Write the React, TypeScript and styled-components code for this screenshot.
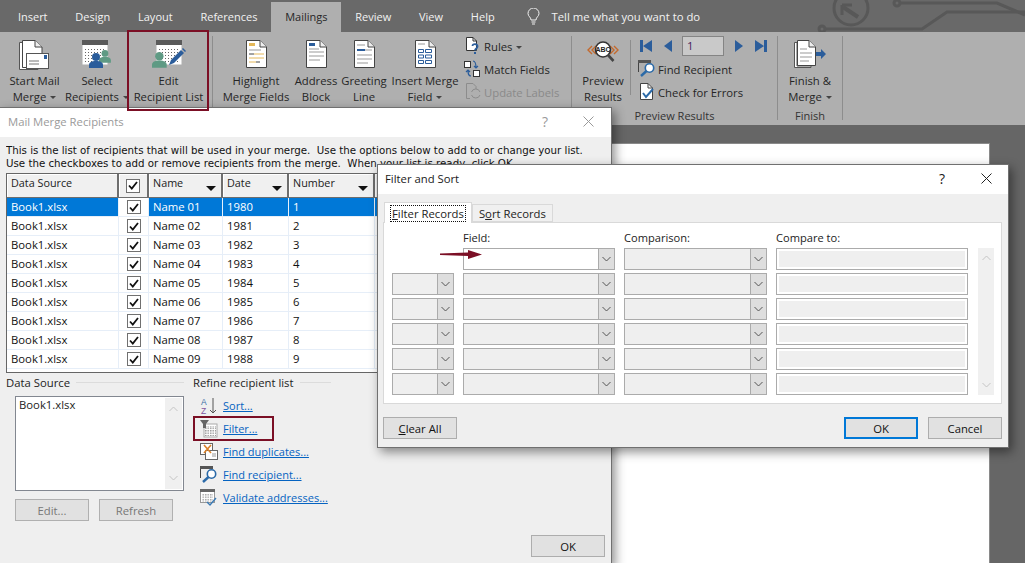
import type { ReactNode } from "react";
import styled, { createGlobalStyle } from "styled-components";

const GlobalStyle = createGlobalStyle`
  html, body {
    margin: 0;
    padding: 0;
    overflow: hidden;
    background: #666;
  }
  * {
    box-sizing: border-box;
  }
`;

const uiFont = `"Open Sans", "Noto Sans", "Liberation Sans", sans-serif`;
const textSize = "11.3px";

const tabs = [
  { label: "Insert" },
  { label: "Design" },
  { label: "Layout" },
  { label: "References" },
  { label: "Mailings", active: true },
  { label: "Review" },
  { label: "View" },
  { label: "Help" },
];

const recipients = [
  ["Name 01", "1980", "1"],
  ["Name 02", "1981", "2"],
  ["Name 03", "1982", "3"],
  ["Name 04", "1983", "4"],
  ["Name 05", "1984", "5"],
  ["Name 06", "1985", "6"],
  ["Name 07", "1986", "7"],
  ["Name 08", "1987", "8"],
  ["Name 09", "1988", "9"],
];

/* ---------- icons ---------- */

const Page = ({ children, x = 0 }: { children?: ReactNode; x?: number }) => (
  <g transform={`translate(${x} 0)`}>
    <path d="M.5.5H14L20.5 7V27.5H.5Z" fill="#fff" stroke="#444" />
    <path d="M14 .5V7H20.5" fill="#eee" stroke="#444" />
    {children}
  </g>
);

const Svg = styled.svg`
  display: block;
  flex: none;
`;

const MailMergeIcon = () => (
  <Svg width="32" height="30" viewBox="0 0 32 30">
    <path d="M.5 2.5H4V27.5H19V29.5H.5Z" fill="#fff" stroke="#555" />
    <path d="M3.5.5H16L23 7V27.5H3.5Z" fill="#fff" stroke="#444" />
    <path d="M16 .5V7H23" fill="#eee" stroke="#444" />
    <rect x="7.5" y="13.5" width="22" height="15" fill="#fff" stroke="#555" />
    <rect x="25" y="15" width="3" height="4" fill="#2b5d9b" />
    <path d="M10 21H20M10 24H20" stroke="#777" />
  </Svg>
);

const DottedCalendar = () => (
  <>
    <rect x=".5" y=".5" width="25" height="24" fill="#fff" />
    <rect width="26" height="5" fill="#5a5a5a" />
    <rect x="2" y="7" width="22" height="17" fill="url(#cal-dots)" />
  </>
);

const Dots = () => (
  <defs>
    <pattern id="cal-dots" width="3" height="3" patternUnits="userSpaceOnUse">
      <rect width="1" height="1" fill="#666" />
    </pattern>
  </defs>
);

const Person = ({ x, y, color, scale = 1 }: { x: number; y: number; color: string; scale?: number }) => (
  <g transform={`translate(${x} ${y}) scale(${scale})`} fill={color}>
    <circle cx="7" cy="4" r="4" />
    <path d="M0 15V12C0 9.5 2.5 8 7 8S14 9.5 14 12V15Z" />
  </g>
);

const SelectRecipientsIcon = () => (
  <Svg width="30" height="29" viewBox="0 0 30 29">
    <Dots />
    <DottedCalendar />
    <Person x={17} y={10} color="#5f9a84" scale={0.85} />
    <Person x={7} y={13} color="#2b5d9b" />
  </Svg>
);

const EditListIcon = () => (
  <Svg width="34" height="29" viewBox="0 0 34 29">
    <Dots />
    <g transform="translate(4 0)">
      <DottedCalendar />
    </g>
    <Person x={0} y={12} color="#5f9a84" scale={1.05} />
    <path d="M17 25L19 20L29 10L32 13L22 23Z" fill="#2b5d9b" />
    <path d="M30 9L31 8L34 11L33 12Z" fill="#2b5d9b" />
  </Svg>
);

const HighlightIcon = () => (
  <Svg width="21" height="28" viewBox="0 0 21 28">
    <Page>
      <rect x="3" y="3" width="6" height="3" fill="#e4b85a" />
      <path d="M3 10H15" stroke="#999" />
      <path d="M3 14H8" stroke="#444" />
      <path d="M8 14H18" stroke="#e4b85a" />
      <path d="M3 18H18" stroke="#e4b85a" />
      <path d="M3 22H10" stroke="#e4b85a" />
      <path d="M10 22H14" stroke="#444" />
    </Page>
  </Svg>
);

const AddressIcon = () => (
  <Svg width="21" height="28" viewBox="0 0 21 28">
    <Page>
      <rect x="3" y="3" width="6" height="3" fill="#2b5d9b" />
      <path d="M3 9H13M3 12H18M3 16H18M3 20H14" stroke="#999" />
    </Page>
  </Svg>
);

const GreetingIcon = () => (
  <Svg width="21" height="28" viewBox="0 0 21 28">
    <Page>
      <path d="M3 5H11M3 15H18M3 19H18M3 23H14" stroke="#999" />
      <rect x="3" y="9" width="8" height="2" fill="#2b5d9b" />
      <path d="M11 10H18" stroke="#999" />
    </Page>
  </Svg>
);

const InsertFieldIcon = () => (
  <Svg width="21" height="28" viewBox="0 0 21 28">
    <Page>
      <path d="M3 4H10" stroke="#999" />
      <path
        d="M3.5 9.5H8.5V12.5H3.5ZM10.5 9.5H16.5V12.5H10.5ZM3.5 15H8.5V18H3.5ZM10.5 15H16.5V18H10.5ZM3.5 20.5H8.5V23.5H3.5ZM10.5 20.5H16.5V23.5H10.5Z"
        fill="none"
        stroke="#2b5d9b"
      />
    </Page>
  </Svg>
);

const PreviewIcon = () => (
  <Svg width="34" height="24" viewBox="0 0 34 24">
    <path d="M6 6L2 10L6 14M10 6L6 10L10 14M24 6L28 10L24 14M28 6L32 10L28 14" fill="none" stroke="#c4692c" strokeWidth="1.4" />
    <circle cx="17" cy="9.5" r="7.5" fill="#fff" stroke="#333" strokeWidth="1.6" />
    <path d="M22 15L27.5 21" stroke="#444" strokeWidth="2.6" />
    <text x="17" y="12" textAnchor="middle" fontSize="7" fontWeight="700" fontFamily="Liberation Sans" fill="#222">
      ABC
    </text>
  </Svg>
);

const FinishIcon = () => (
  <Svg width="33" height="28" viewBox="0 0 33 28">
    <path d="M.5 2.5H3V26H17V27.5H.5Z" fill="#fff" stroke="#555" />
    <path d="M3.5.5H15L21.5 7V25.5H3.5Z" fill="#fff" stroke="#444" />
    <path d="M15 .5V7H21.5" fill="#eee" stroke="#444" />
    <path d="M6 9H13M6 13H18M6 17H18M6 21H15" stroke="#999" />
    <path d="M22 12H27V9L32 14L27 19V16H22Z" fill="#2b5d9b" />
  </Svg>
);

const RulesIcon = () => (
  <Svg width="18" height="18" viewBox="0 0 18 18">
    <path d="M2.5.5H9L12.5 4V13.5H2.5Z" fill="#fff" stroke="#333" />
    <path d="M9 .5V4H12.5" fill="none" stroke="#333" />
    <path d="M8.5 9C8.5 6.5 13.5 6.5 13.5 9.5C13.5 11.5 11 11.5 11 13.5" fill="none" stroke="#2b5d9b" strokeWidth="1.8" />
    <rect x="10" y="15" width="2" height="2" fill="#2b5d9b" />
  </Svg>
);

const MatchIcon = () => (
  <Svg width="18" height="18" viewBox="0 0 18 18">
    <rect x=".5" y="1.5" width="6" height="6" fill="#fff" stroke="#333" />
    <rect x="9.5" y="10.5" width="6" height="6" fill="#fff" stroke="#333" />
    <path d="M9 1C11.5 1 12 3 12 8M10 6L12 8L14 6" fill="none" stroke="#2b5d9b" strokeWidth="1.2" />
    <path d="M7 16C4.5 16 4 14 4 10M2 12L4 10L6 12" fill="none" stroke="#2b5d9b" strokeWidth="1.2" />
  </Svg>
);

const UpdateIcon = () => (
  <Svg width="18" height="18" viewBox="0 0 18 18">
    <path d="M2.5.5H9L12 3.5V6M6 15.5H2.5V.5" fill="none" stroke="#8c8c8c" />
    <path d="M16 9A4.5 4.5 0 0 0 7.5 9M7.5 12A4.5 4.5 0 0 0 16 12" fill="none" stroke="#8c8c8c" />
  </Svg>
);

const FindIcon = () => (
  <Svg width="18" height="18" viewBox="0 0 18 18">
    <path d="M.5 12V.5H12" fill="none" stroke="#444" />
    <rect width="13" height="3" fill="#555" />
    <circle cx="11.5" cy="8" r="4.2" fill="#fff" stroke="#2b6aa8" strokeWidth="1.6" />
    <path d="M8.5 11L3 16" stroke="#2b6aa8" strokeWidth="2.4" />
  </Svg>
);

const ErrorsIcon = () => (
  <Svg width="18" height="18" viewBox="0 0 18 18">
    <path d="M2.5.5H10L14.5 5V16.5H2.5Z" fill="#fff" stroke="#444" />
    <path d="M10 .5V5H14.5" fill="none" stroke="#444" />
    <path d="M5 10L8 14L15 6" fill="none" stroke="#2b6aa8" strokeWidth="2" />
  </Svg>
);

const NavIcon = ({ kind }: { kind: "first" | "prev" | "next" | "last" }) => {
  const shapes = {
    first: "M0 0H3V12H0ZM12 0V12L3 6Z",
    prev: "M8 0V12L0 6Z",
    next: "M0 0V12L8 6Z",
    last: "M0 0V12L9 6ZM9 0H12V12H9Z",
  };
  const wide = kind === "first" || kind === "last";
  return (
    <Svg width={wide ? 12 : 8} height="12" viewBox={wide ? "0 0 12 12" : "0 0 8 12"}>
      <path d={shapes[kind]} fill="#2b5d9b" />
    </Svg>
  );
};

const SortIcon = () => (
  <Svg width="18" height="18" viewBox="0 0 18 18">
    <text x="1" y="8" fontSize="8.5" fontFamily="Liberation Sans" fill="#3a6ea5">
      A
    </text>
    <text x="1" y="17" fontSize="8.5" fontFamily="Liberation Sans" fill="#8257a0">
      Z
    </text>
    <path d="M13 1V16M10 13L13 16L16 13" fill="none" stroke="#555" />
  </Svg>
);

const FilterIcon = () => (
  <Svg width="18" height="18" viewBox="0 0 18 18">
    <defs>
      <pattern id="filter-grid" width="2.5" height="2.5" patternUnits="userSpaceOnUse">
        <rect width="1.5" height="1.5" fill="#999" />
      </pattern>
    </defs>
    <rect x="4" y="4" width="13" height="13" fill="#fff" stroke="#aaa" />
    <rect x="5" y="6" width="11" height="10" fill="url(#filter-grid)" />
    <path d="M0 0H9L6 4V8H3V4Z" fill="#666" />
  </Svg>
);

const DuplicatesIcon = () => (
  <Svg width="18" height="18" viewBox="0 0 18 18">
    <rect x=".5" y=".5" width="12" height="11" fill="#fff" stroke="#666" />
    <rect x="5.5" y="7.5" width="12" height="9" fill="#fff" stroke="#666" />
    <path d="M4 2L11 10M11 2L4 10" stroke="#d9822b" strokeWidth="1.6" />
    <path d="M12 11H16M12 13H16" stroke="#999" />
  </Svg>
);

const ValidateIcon = () => (
  <Svg width="18" height="18" viewBox="0 0 18 18">
    <defs>
      <pattern id="validate-grid" width="2.5" height="2.5" patternUnits="userSpaceOnUse">
        <rect width="1.5" height="1.5" fill="#aaa" />
      </pattern>
    </defs>
    <rect x=".5" y=".5" width="14" height="13" fill="#fff" stroke="#999" />
    <rect width="15" height="3" fill="#666" />
    <rect x="2" y="5" width="11" height="8" fill="url(#validate-grid)" />
    <path d="M7 13L10 16L16 9" fill="none" stroke="#3a7ab5" strokeWidth="1.4" />
  </Svg>
);

const Chevron = ({ up, color = "#555" }: { up?: boolean; color?: string }) => (
  <Svg width="9" height="6" viewBox="0 0 9 6">
    <path d={up ? "M.5 5L4.5 1L8.5 5" : "M.5 1L4.5 5L8.5 1"} fill="none" stroke={color} />
  </Svg>
);

const Check = () => (
  <Svg width="10" height="9" viewBox="0 0 10 9">
    <path d="M1 4.5L3.8 7.5L9 1" fill="none" stroke="#111" strokeWidth="1.8" />
  </Svg>
);

const CloseIcon = ({ color }: { color: string }) => (
  <Svg width="11" height="11" viewBox="0 0 11 11">
    <path d="M.5.5L10.5 10.5M10.5.5L.5 10.5" stroke={color} />
  </Svg>
);

/* ---------- app chrome ---------- */

const Screen = styled.div`
  position: relative;
  width: 1025px;
  height: 563px;
  overflow: hidden;
  display: flex;
  flex-direction: column;
  background: #666;
  font-family: ${uiFont};
  font-size: ${textSize};
  color: #222;
`;

const TabBar = styled.div`
  position: relative;
  flex: none;
  height: 32px;
  display: flex;
  align-items: flex-end;
  padding-left: 4px;
  background: #696969;
  overflow: hidden;
`;

const Tab = styled.div<{ $active?: boolean }>`
  height: 30px;
  padding: 0 13.9px 2px;
  display: flex;
  align-items: center;
  font-size: 11px;
  color: ${(p) => (p.$active ? "#262626" : "#f2f2f2")};
  background: ${(p) => (p.$active ? "#afafaf" : "transparent")};
`;

const TellMe = styled.div`
  margin-left: 18px;
  height: 30px;
  padding-bottom: 2px;
  display: flex;
  align-items: center;
  gap: 12px;
  font-size: ${textSize};
  color: #f2f2f2;
`;

const Circuit = styled.svg`
  position: absolute;
  top: 0;
  right: 0;
`;

const Ribbon = styled.div`
  flex: none;
  height: 93px;
  display: flex;
  padding: 4px 0 5px;
  background: #afafaf;
`;

const Group = styled.div<{ $width: number }>`
  width: ${(p) => p.$width}px;
  flex: none;
  display: flex;
  flex-direction: column;
  border-right: 1px solid #8d8d8d;
`;

const GroupBody = styled.div<{ $pad?: number }>`
  flex: 1;
  min-height: 0;
  display: flex;
  padding-left: ${(p) => p.$pad ?? 0}px;
`;

const GroupLabel = styled.div`
  flex: none;
  height: 15px;
  margin-bottom: -3px;
  line-height: 15px;
  text-align: center;
  font-size: 11px;
  color: #333;
`;

const BigButton = styled.div<{ $width: number; $marked?: boolean }>`
  position: relative;
  flex: none;
  width: ${(p) => p.$width}px;
  height: 74px;
  display: flex;
  flex-direction: column;
  align-items: center;
  text-align: center;
  white-space: nowrap;
  font-size: ${textSize};
  line-height: 16px;
  color: #262626;
  ${(p) =>
    p.$marked &&
    `
    &::after {
      content: "";
      position: absolute;
      z-index: 5;
      top: -6px;
      left: -1px;
      right: 0;
      bottom: -1px;
      border: 2px solid #7b0f25;
    }
  `}
`;

const BigIcon = styled.div`
  height: 37px;
  padding-top: 4px;
  display: flex;
  justify-content: center;
`;

const Caret = styled.span`
  display: inline-block;
  margin-left: 4px;
  vertical-align: middle;
  border-left: 3px solid transparent;
  border-right: 3px solid transparent;
  border-top: 3px solid #444;
`;

const SmallColumn = styled.div<{ $left?: number }>`
  margin-left: ${(p) => p.$left ?? 0}px;
  display: flex;
  flex-direction: column;
  gap: 5px;
  padding-top: 1px;
`;

const SmallButton = styled.div<{ $disabled?: boolean }>`
  height: 18px;
  display: flex;
  align-items: center;
  gap: 2px;
  white-space: nowrap;
  font-size: ${textSize};
  color: ${(p) => (p.$disabled ? "#8a8a8a" : "#262626")};
`;

const NavRow = styled.div`
  height: 18px;
  display: flex;
  align-items: center;
  gap: 12px;
  padding-left: 2px;
`;

const NavInput = styled.div`
  width: 42px;
  height: 20px;
  margin: 0 -1px 0 -2px;
  padding-left: 4px;
  line-height: 18px;
  border: 1px solid #848484;
  background: #c9c9c9;
  color: #4a1a5c;
  font-size: ${textSize};
`;

const Divider = styled.div`
  width: 1px;
  height: 55px;
  margin: 4px 7px 0 2px;
  background: #8d8d8d;
`;

const Workspace = styled.div`
  flex: 1;
  display: flex;
  justify-content: flex-end;
  padding: 18px 35px 0 0;
  background: #666;
`;

const DocumentSheet = styled.div`
  width: 600px;
  background: #fff;
  border: 1px solid #8a8a8a;
  border-bottom: 0;
`;

/* ---------- dialogs ---------- */

const Dialog = styled.div<{ $left: number; $top: number; $width: number; $height: number }>`
  position: absolute;
  left: ${(p) => p.$left}px;
  top: ${(p) => p.$top}px;
  width: ${(p) => p.$width}px;
  height: ${(p) => p.$height}px;
  display: flex;
  flex-direction: column;
  background: #efefef;
  border: 1px solid #707070;
  box-shadow: 3px 4px 10px rgba(0, 0, 0, 0.45);
`;

const TitleBar = styled.div<{ $dim?: boolean; $pad: number }>`
  flex: none;
  height: 29px;
  display: flex;
  align-items: center;
  padding: 0 0 2px ${(p) => p.$pad}px;
  background: #fff;
  font-size: ${textSize};
  color: ${(p) => (p.$dim ? "#9a9a9a" : "#1a1a1a")};
`;

const TitleText = styled.div`
  flex: 1;
`;

const TitleHelp = styled.div<{ $right: number }>`
  margin-right: ${(p) => p.$right}px;
  font-size: 14px;
`;

const TitleClose = styled.div<{ $right: number }>`
  margin-right: ${(p) => p.$right}px;
`;

const RecipientsBody = styled.div`
  flex: 1;
  display: flex;
  flex-direction: column;
  padding: 6px 6px 7px 6px;
`;

const Intro = styled.div`
  height: 30px;
  padding-top: 1px;
  font-family: "DejaVu Sans", sans-serif;
  font-size: 10.25px;
  line-height: 13px;
  white-space: pre;
  overflow: hidden;
  color: #111;
`;

const Table = styled.div`
  flex: none;
  height: 200px;
  overflow: hidden;
  border: 1px solid #666;
  background: #fff;
`;

const tableColumns = "112px 30px 74px 66px 86px 1fr";

const HeadRow = styled.div`
  display: grid;
  grid-template-columns: ${tableColumns};
  height: 24px;
`;

const HeadCell = styled.div`
  position: relative;
  padding: 1px 0 0 4px;
  font-size: 10.8px;
  line-height: 16px;
  background: #f0f0f0;
  border-right: 2px solid #6e6e6e;
  border-bottom: 1px solid #6e6e6e;
  box-shadow: inset 1px 1px 0 #fff;
  color: #222;
`;

const HeadCheckCell = styled(HeadCell)`
  display: flex;
  align-items: center;
  justify-content: center;
  padding: 0;
`;

const SortArrow = styled.span`
  position: absolute;
  right: 5px;
  bottom: 6px;
  border-left: 5px solid transparent;
  border-right: 5px solid transparent;
  border-top: 5px solid #111;
`;

const DataRow = styled.div<{ $selected?: boolean }>`
  display: grid;
  grid-template-columns: ${tableColumns};
  height: 19px;
  background: ${(p) => (p.$selected ? "#0078d7" : "#fff")};
  color: ${(p) => (p.$selected ? "#fff" : "#111")};
`;

const DataCell = styled.div<{ $selected?: boolean }>`
  padding-left: 4px;
  font-size: ${textSize};
  line-height: 18px;
  border-right: 1px solid ${(p) => (p.$selected ? "#e8f1fb" : "#e6eef8")};
  border-bottom: 1px solid #e6eef8;
  white-space: nowrap;
`;

const CheckCell = styled.div`
  display: flex;
  align-items: center;
  justify-content: center;
  background: #fff;
  border-right: 1px solid #e6eef8;
  border-bottom: 1px solid #e6eef8;
`;

const CheckBox = styled.div`
  width: 14px;
  height: 14px;
  display: flex;
  align-items: center;
  justify-content: center;
  background: #fff;
  border: 1px solid #707070;
`;

const LowerPane = styled.div`
  display: flex;
  margin-top: 2px;
`;

const SourcePane = styled.div`
  width: 187px;
  flex: none;
`;

const Legend = styled.div<{ $width: number }>`
  width: ${(p) => p.$width}px;
  height: 16px;
  padding-bottom: 2px;
  display: flex;
  align-items: center;
  gap: 6px;
  font-size: ${textSize};
  color: #222;
  &::after {
    content: "";
    flex: 1;
    height: 1px;
    background: #dcdcdc;
  }
`;

const ListBox = styled.div`
  position: relative;
  width: 169px;
  height: 95px;
  margin: 5px 0 8px 9px;
  padding: 0 3px;
  background: #fff;
  border: 1px solid #828790;
  font-size: ${textSize};
  line-height: 16px;
`;

const ListScroll = styled.div`
  position: absolute;
  top: 1px;
  right: 1px;
  bottom: 1px;
  width: 17px;
  display: flex;
  flex-direction: column;
  justify-content: space-between;
  align-items: center;
  padding: 8px 0;
  background: #f0f0f0;
`;

const ButtonRow = styled.div`
  display: flex;
  gap: 10px;
  margin-left: 9px;
`;

const Button = styled.div<{ $width: number; $disabled?: boolean; $default?: boolean }>`
  width: ${(p) => p.$width}px;
  height: 22px;
  display: flex;
  align-items: center;
  justify-content: center;
  font-size: ${textSize};
  background: #e1e1e1;
  border: ${(p) => (p.$default ? "2px solid #0078d7" : `1px solid ${p.$disabled ? "#b0b0b0" : "#adadad"}`)};
  color: ${(p) => (p.$disabled ? "#777" : "#111")};
`;

const RefinePane = styled.div`
  flex: 1;
`;

const LinkList = styled.div`
  display: flex;
  flex-direction: column;
  padding-top: 3px;
`;

const LinkRow = styled.div<{ $marked?: boolean }>`
  width: fit-content;
  min-width: 79px;
  height: 23px;
  display: flex;
  align-items: center;
  gap: 5px;
  padding-left: 6px;
  margin-left: 1px;
  outline: ${(p) => (p.$marked ? "2px solid #7b0f25" : "none")};
  outline-offset: -1px;
`;

const Link = styled.span`
  font-size: 11px;
  color: #0563c1;
  text-decoration: underline;
`;

const Footer = styled.div`
  margin-top: auto;
  display: flex;
  justify-content: flex-end;
`;

const FilterBody = styled.div`
  flex: 1;
  display: flex;
  flex-direction: column;
  padding: 8px 6px 8px 5px;
`;

const TabStrip = styled.div`
  height: 20px;
  display: flex;
  align-items: flex-end;
  margin-left: 1px;
`;

const PanelTab = styled.div<{ $active?: boolean }>`
  height: ${(p) => (p.$active ? 21 : 18)}px;
  margin-bottom: ${(p) => (p.$active ? -1 : 0)}px;
  padding: 0 6px;
  display: flex;
  align-items: center;
  position: relative;
  z-index: ${(p) => (p.$active ? 1 : 0)};
  font-size: ${textSize};
  background: ${(p) => (p.$active ? "#fff" : "#f0f0f0")};
  border: 1px solid #d9d9d9;
  border-bottom: ${(p) => (p.$active ? "0" : "1px solid #d9d9d9")};
`;

const FocusText = styled.span`
  padding: 0 1px;
  outline: 1px dotted #111;
`;

const Panel = styled.div`
  position: relative;
  height: 182px;
  display: flex;
  gap: 10px;
  padding: 8px 0 0 8px;
  background: #fff;
  border: 1px solid #d9d9d9;
`;

const CriteriaGrid = styled.div`
  display: grid;
  grid-template-columns: 62px 152px 143px 192px;
  grid-template-rows: 14px repeat(6, 22px);
  column-gap: 9px;
  row-gap: 3px;
`;

const ColumnLabel = styled.div`
  font-size: 11.1px;
  line-height: 14px;
  color: #222;
`;

const Combo = styled.div<{ $open?: boolean }>`
  display: flex;
  justify-content: flex-end;
  background: ${(p) => (p.$open ? "#fff" : "#efefef")};
  border: 1px solid #ababab;
`;

const ComboButton = styled.div`
  width: 17px;
  display: flex;
  align-items: center;
  justify-content: center;
  background: #dedede;
  border: 1px solid #ababab;
  margin: -1px -1px -1px 0;
`;

const CompareInput = styled.div`
  background: #efefef;
  border: 1px solid #ababab;
  box-shadow: inset 0 0 0 2px #fff;
`;

const ScrollTrack = styled.div`
  width: 16px;
  height: 147px;
  margin-top: 17px;
  display: flex;
  flex-direction: column;
  justify-content: space-between;
  align-items: center;
  padding: 7px 0;
  background: #f0f0f0;
`;

const FieldArrow = styled.svg`
  position: absolute;
  left: 56px;
  top: 27px;
`;

const FilterFooter = styled.div`
  margin-top: 13px;
  display: flex;
  align-items: center;
  gap: 10px;
`;

const Spacer = styled.div`
  flex: 1;
`;

const Hotkey = styled.span`
  text-decoration: underline;
`;

const Cell = ({ children, selected }: { children: ReactNode; selected?: boolean }) => (
  <DataCell $selected={selected}>{children}</DataCell>
);

const ComboBox = ({ open }: { open?: boolean }) => (
  <Combo $open={open}>
    <ComboButton>
      <Chevron />
    </ComboButton>
  </Combo>
);

function Row({ index }: { index: number }) {
  return (
    <>
      {index === 0 ? <span /> : <ComboBox />}
      <ComboBox open={index === 0} />
      <ComboBox />
      <CompareInput />
    </>
  );
}

export default function App() {
  return (
    <Screen>
      <GlobalStyle />
      <TabBar>
        {tabs.map((t) => (
          <Tab key={t.label} $active={t.active}>
            {t.label}
          </Tab>
        ))}
        <TellMe>
          <Svg width="13" height="17" viewBox="0 0 13 17">
            <path d="M4 12C4 9 1 8.5 1 5.5A5.5 5.5 0 0 1 12 5.5C12 8.5 9 9 9 12Z" fill="none" stroke="#f2f2f2" />
            <path d="M4.5 14H8.5M5 16H8" stroke="#f2f2f2" />
          </Svg>
          Tell me what you want to do
        </TellMe>
        <Circuit width="220" height="32" viewBox="0 0 220 32">
          <g fill="none" stroke="#585858" strokeWidth="3">
            <circle cx="46" cy="8" r="17" />
            <path d="M38 7L53 17" strokeWidth="4" />
            <path d="M37 5V15M37 5H47" strokeWidth="3" />
            <circle cx="92" cy="3" r="3" />
            <path d="M95 3H192L220 15" />
            <path d="M20 29H117L142 12H220" />
            <circle cx="17" cy="29" r="3" />
          </g>
        </Circuit>
      </TabBar>

      <Ribbon>
        <Group $width={213}>
          <GroupBody $pad={3}>
            <BigButton $width={63}>
              <BigIcon>
                <MailMergeIcon />
              </BigIcon>
              Start Mail
              <br />
              <span>
                Merge
                <Caret />
              </span>
            </BigButton>
            <BigButton $width={62}>
              <BigIcon>
                <SelectRecipientsIcon />
              </BigIcon>
              Select
              <br />
              <span>
                Recipients
                <Caret />
              </span>
            </BigButton>
            <BigButton $width={81} $marked>
              <BigIcon>
                <EditListIcon />
              </BigIcon>
              Edit
              <br />
              Recipient List
            </BigButton>
          </GroupBody>
        </Group>

        <Group $width={359}>
          <GroupBody $pad={4}>
            <BigButton $width={78}>
              <BigIcon>
                <HighlightIcon />
              </BigIcon>
              Highlight
              <br />
              Merge Fields
            </BigButton>
            <BigButton $width={42}>
              <BigIcon>
                <AddressIcon />
              </BigIcon>
              Address
              <br />
              Block
            </BigButton>
            <BigButton $width={54}>
              <BigIcon>
                <GreetingIcon />
              </BigIcon>
              Greeting
              <br />
              Line
            </BigButton>
            <BigButton $width={68}>
              <BigIcon>
                <InsertFieldIcon />
              </BigIcon>
              Insert Merge
              <br />
              <span>
                Field
                <Caret />
              </span>
            </BigButton>
            <SmallColumn $left={5}>
              <SmallButton>
                <RulesIcon />
                <span>
                  Rules
                  <Caret />
                </span>
              </SmallButton>
              <SmallButton>
                <MatchIcon />
                Match Fields
              </SmallButton>
              <SmallButton $disabled>
                <UpdateIcon />
                Update Labels
              </SmallButton>
            </SmallColumn>
          </GroupBody>
        </Group>

        <Group $width={206}>
          <GroupBody $pad={6}>
            <BigButton $width={50}>
              <BigIcon>
                <PreviewIcon />
              </BigIcon>
              Preview
              <br />
              Results
            </BigButton>
            <Divider />
            <SmallColumn>
              <NavRow>
                <NavIcon kind="first" />
                <NavIcon kind="prev" />
                <NavInput>1</NavInput>
                <NavIcon kind="next" />
                <NavIcon kind="last" />
              </NavRow>
              <SmallButton>
                <FindIcon />
                Find Recipient
              </SmallButton>
              <SmallButton>
                <ErrorsIcon />
                Check for Errors
              </SmallButton>
            </SmallColumn>
          </GroupBody>
          <GroupLabel>Preview Results</GroupLabel>
        </Group>

        <Group $width={65}>
          <GroupBody>
            <BigButton $width={64}>
              <BigIcon>
                <FinishIcon />
              </BigIcon>
              Finish &amp;
              <br />
              <span>
                Merge
                <Caret />
              </span>
            </BigButton>
          </GroupBody>
          <GroupLabel>Finish</GroupLabel>
        </Group>
      </Ribbon>

      <Workspace>
        <DocumentSheet />
      </Workspace>

      <Dialog $left={-1} $top={107} $width={613} $height={458}>
        <TitleBar $dim $pad={8}>
          <TitleText>Mail Merge Recipients</TitleText>
          <TitleHelp $right={35}>?</TitleHelp>
          <TitleClose $right={17}>
            <CloseIcon color="#999" />
          </TitleClose>
        </TitleBar>
        <RecipientsBody>
          <Intro>
            {"This is the list of recipients that will be used in your merge.  Use the options below to add to or change your list.\nUse the checkboxes to add or remove recipients from the merge.  When your list is ready, click OK."}
          </Intro>
          <Table>
            <HeadRow>
              <HeadCell>Data Source</HeadCell>
              <HeadCheckCell>
                <CheckBox>
                  <Check />
                </CheckBox>
              </HeadCheckCell>
              <HeadCell>
                Name
                <SortArrow />
              </HeadCell>
              <HeadCell>
                Date
                <SortArrow />
              </HeadCell>
              <HeadCell>
                Number
                <SortArrow />
              </HeadCell>
              <HeadCell />
            </HeadRow>
            {recipients.map(([name, year, num], i) => (
              <DataRow key={name} $selected={i === 0}>
                <Cell selected={i === 0}>Book1.xlsx</Cell>
                <CheckCell>
                  <CheckBox>
                    <Check />
                  </CheckBox>
                </CheckCell>
                <Cell selected={i === 0}>{name}</Cell>
                <Cell selected={i === 0}>{year}</Cell>
                <Cell selected={i === 0}>{num}</Cell>
                <Cell selected={i === 0}>{""}</Cell>
              </DataRow>
            ))}
          </Table>
          <LowerPane>
            <SourcePane>
              <Legend $width={178}>Data Source</Legend>
              <ListBox>
                Book1.xlsx
                <ListScroll>
                  <Chevron up color="#c4c4c4" />
                  <Chevron color="#c4c4c4" />
                </ListScroll>
              </ListBox>
              <ButtonRow>
                <Button $width={74} $disabled>
                  Edit...
                </Button>
                <Button $width={74} $disabled>
                  Refresh
                </Button>
              </ButtonRow>
            </SourcePane>
            <RefinePane>
              <Legend $width={138}>Refine recipient list</Legend>
              <LinkList>
                <LinkRow>
                  <SortIcon />
                  <Link>Sort...</Link>
                </LinkRow>
                <LinkRow $marked>
                  <FilterIcon />
                  <Link>Filter...</Link>
                </LinkRow>
                <LinkRow>
                  <DuplicatesIcon />
                  <Link>Find duplicates...</Link>
                </LinkRow>
                <LinkRow>
                  <FindIcon />
                  <Link>Find recipient...</Link>
                </LinkRow>
                <LinkRow>
                  <ValidateIcon />
                  <Link>Validate addresses...</Link>
                </LinkRow>
              </LinkList>
            </RefinePane>
          </LowerPane>
          <Footer>
            <Button $width={74}>OK</Button>
          </Footer>
        </RecipientsBody>
      </Dialog>

      <Dialog $left={377} $top={164} $width={632} $height={284}>
        <TitleBar $pad={7}>
          <TitleText>Filter and Sort</TitleText>
          <TitleHelp $right={36}>?</TitleHelp>
          <TitleClose $right={16}>
            <CloseIcon color="#222" />
          </TitleClose>
        </TitleBar>
        <FilterBody>
          <TabStrip>
            <PanelTab $active>
              <FocusText>
                <Hotkey>F</Hotkey>ilter Records
              </FocusText>
            </PanelTab>
            <PanelTab>
              <span>
                S<Hotkey>o</Hotkey>rt Records
              </span>
            </PanelTab>
          </TabStrip>
          <Panel>
            <CriteriaGrid>
              <span />
              <ColumnLabel>Field:</ColumnLabel>
              <ColumnLabel>Comparison:</ColumnLabel>
              <ColumnLabel>Compare to:</ColumnLabel>
              {[0, 1, 2, 3, 4, 5].map((row) => (
                <Row key={row} index={row} />
              ))}
            </CriteriaGrid>
            <ScrollTrack>
              <Chevron up color="#c4c4c4" />
              <Chevron color="#c4c4c4" />
            </ScrollTrack>
            <FieldArrow width="42" height="9" viewBox="0 0 42 9">
              <path d="M0 3.4L28 2.6V0L42 4.5L28 9V6L0 5Z" fill="#7b0f25" />
            </FieldArrow>
          </Panel>
          <FilterFooter>
            <Button $width={74}>
              <span>
                <Hotkey>C</Hotkey>lear All
              </span>
            </Button>
            <Spacer />
            <Button $width={74} $default>
              OK
            </Button>
            <Button $width={74}>Cancel</Button>
          </FilterFooter>
        </FilterBody>
      </Dialog>
    </Screen>
  );
}
